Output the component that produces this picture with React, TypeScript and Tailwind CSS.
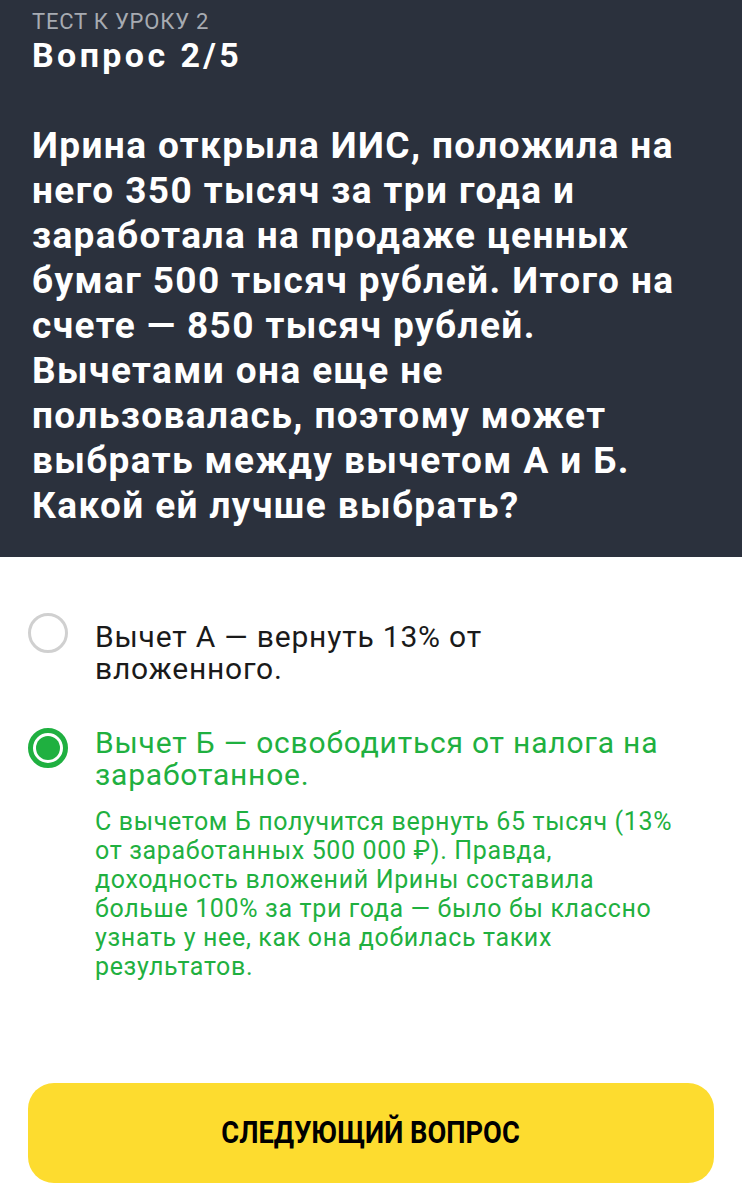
const explanation =
  "С вычетом Б получится вернуть 65 тысяч (13% от заработанных 500 000 ₽). Правда, доходность вложений Ирины составила больше 100% за три года — было бы классно узнать у нее, как она добилась таких результатов.";

function Radio({ checked, offset }: { checked: boolean; offset: string }) {
  if (checked) {
    return (
      <div className={`${offset} flex h-[40px] w-[40px] shrink-0 items-center justify-center rounded-full border-[5px] border-[#1fb040]`}>
        <div className="h-[24px] w-[24px] rounded-full bg-[#1fb040]" />
      </div>
    );
  }
  return <div className={`${offset} h-[40px] w-[40px] shrink-0 rounded-full border-[3px] border-[#d0d0d0]`} />;
}

export default function App() {
  return (
    <div className="flex min-h-[1200px] w-[742px] flex-col bg-white font-['Roboto',sans-serif]">
      <header className="bg-[#2b313d] px-8 pb-[29px] pt-[9px]">
        <p className="text-[22px] leading-[26px] tracking-[0.8px] text-[#a7abb2]">ТЕСТ К УРОКУ 2</p>
        <h1 className="text-[34px] font-bold leading-[40px] tracking-[3.4px] text-white">Вопрос 2/5</h1>
        <p className="mt-[48px] text-[37px] font-bold leading-[45px] tracking-[1.4px] text-white">
          Ирина открыла ИИС, положила на него 350 тысяч за три года и заработала на продаже ценных бумаг 500 тысяч рублей. Итого на счете — 850 тысяч рублей. Вычетами она еще не пользовалась, поэтому может выбрать между вычетом А и Б. Какой ей лучше выбрать?
        </p>
      </header>

      <main className="flex flex-col gap-[42px] px-[28px] pt-[64px]">
        <div className="flex gap-[27px]">
          <Radio checked={false} offset="-mt-[8px]" />
          <p className="max-w-[570px] text-[30px] leading-[32px] tracking-[0.8px] text-[#1a1a1a]">
            Вычет А — вернуть 13% от вложенного.
          </p>
        </div>
        <div className="flex gap-[27px]">
          <Radio checked offset="mt-[1px]" />
          <div>
            <p className="max-w-[575px] text-[30px] leading-[32px] tracking-[0.8px] text-[#1fb040]">
              Вычет Б — освободиться от налога на заработанное.
            </p>
            <p className="mt-[16px] max-w-[580px] text-[25px] leading-[29px] tracking-[0.65px] text-[#1fb040]">{explanation}</p>
          </div>
        </div>
      </main>

      <div className="mt-auto px-[28px] pb-[17px]">
        <button className="flex h-[100px] w-full items-center justify-center rounded-[26px] bg-[#fddc2f]">
          <span className="inline-block scale-x-[0.88] whitespace-nowrap text-[31px] font-bold text-black">
            СЛЕДУЮЩИЙ ВОПРОС
          </span>
        </button>
      </div>
    </div>
  );
}
